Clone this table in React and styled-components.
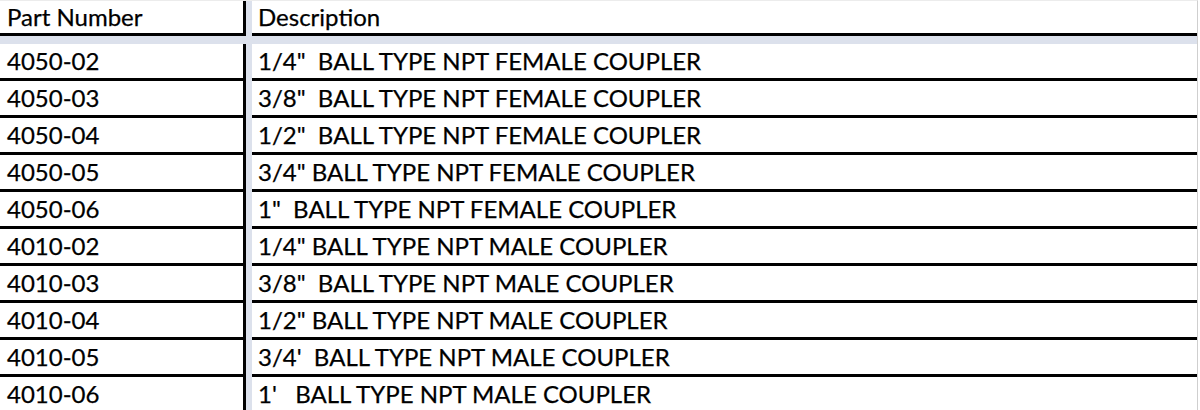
import React from "react";
import styled, { createGlobalStyle } from "styled-components";

const Global = createGlobalStyle`
  html, body { margin: 0; padding: 0; background: #ffffff; }
  body { font-family: Lato, "Open Sans", sans-serif; }
`;

const Sheet = styled.div`
  width: 1198px;
  height: 410px;
  overflow: hidden;
  border-right: 1px solid #cfcfcf;
  border-top: 1px solid #ececec;
  background: #dce1ec;
  box-sizing: border-box;
  display: flex;
  flex-direction: column;
`;

const Row = styled.div`
  display: grid;
  grid-template-columns: 246px 1fr;
  column-gap: 6px;
  margin-bottom: ${(p) => (p.$header ? "8px" : "0")};
`;

const Cell = styled.div`
  background: #ffffff;
  height: ${(p) => (p.$header ? "32px" : "34px")};
  border-bottom: 3px solid ${(p) => (p.$last ? "#d6d6d6" : "#000000")};
  border-right: ${(p) => (p.$first ? "3px solid #000000" : "none")};
  padding-left: ${(p) => (p.$first ? "7px" : "6px")};
  box-sizing: border-box;
  height: ${(p) => (p.$header ? "35px" : "37px")};
  display: flex;
  align-items: center;
  font-size: 24px;
  color: #000000;
  -webkit-text-stroke: 0.25px #000000;
  white-space: pre;
  line-height: 1;
`;

const rows = [
  ["4050-02", '1/4"  BALL TYPE NPT FEMALE COUPLER'],
  ["4050-03", '3/8"  BALL TYPE NPT FEMALE COUPLER'],
  ["4050-04", '1/2"  BALL TYPE NPT FEMALE COUPLER'],
  ["4050-05", '3/4" BALL TYPE NPT FEMALE COUPLER'],
  ["4050-06", '1"  BALL TYPE NPT FEMALE COUPLER'],
  ["4010-02", '1/4" BALL TYPE NPT MALE COUPLER'],
  ["4010-03", '3/8"  BALL TYPE NPT MALE COUPLER'],
  ["4010-04", '1/2" BALL TYPE NPT MALE COUPLER'],
  ["4010-05", "3/4'  BALL TYPE NPT MALE COUPLER"],
  ["4010-06", "1'   BALL TYPE NPT MALE COUPLER"],
];

export default function App() {
  return (
    <>
      <Global />
      <Sheet>
        <Row $header>
          <Cell $first $header>Part Number</Cell>
          <Cell $header>Description</Cell>
        </Row>
        {rows.map(([pn, desc], i) => (
          <Row key={pn}>
            <Cell $first $last={i === rows.length - 1}>{pn}</Cell>
            <Cell $last={i === rows.length - 1}>{desc}</Cell>
          </Row>
        ))}
      </Sheet>
    </>
  );
}
